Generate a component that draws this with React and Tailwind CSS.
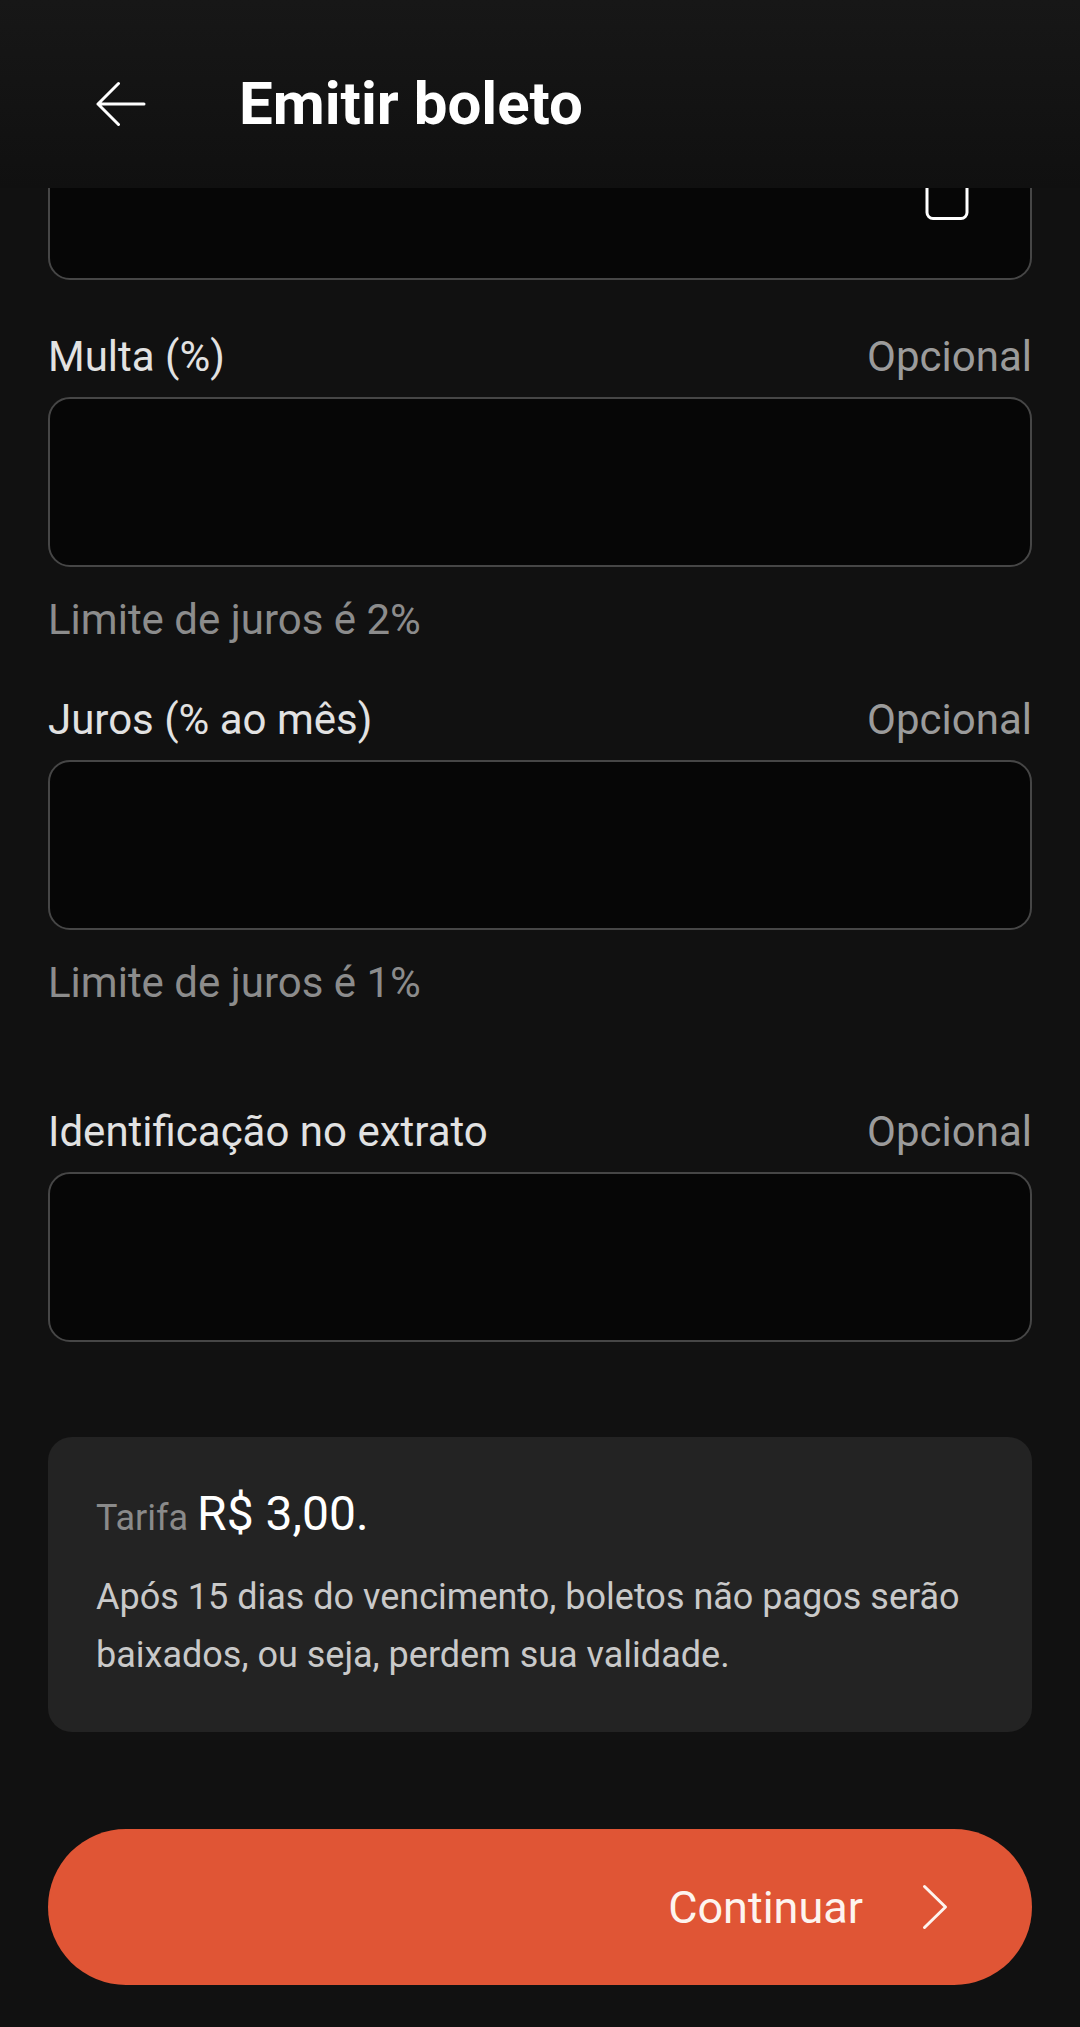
export default function App() {
  return (
    <div className="relative min-h-[2027px] bg-[#111111] font-['Roboto','Noto_Sans',sans-serif] text-white">
      <Header />
      <main className="px-[48px] pt-[110px] pb-[40px]">
        <div className="h-[170px] rounded-[22px] border-2 border-[#464646] bg-[#060606] flex items-center justify-end pr-[61px]">
          <svg width="44" height="50" viewBox="0 0 44 50" fill="none">
            <rect x="2" y="1.5" width="40" height="47" rx="6" stroke="white" strokeWidth="3" />
          </svg>
        </div>

        <Field label="Multa (%)" hint="Limite de juros é 2%" className="mt-[52px]" />
        <Field label="Juros (% ao mês)" hint="Limite de juros é 1%" className="mt-[50px]" />
        <Field label="Identificação no extrato" className="mt-[99px]" />

        <div className="mt-[95px] rounded-[24px] bg-[#232323] px-[48px] pt-[49px] pb-[48px]">
          <p className="leading-[56px] whitespace-nowrap">
            <span className="text-[36px] text-[#8a8a8a]">Tarifa </span>
            <span className="text-[48px] text-white">R$ 3,00.</span>
          </p>
          <p className="mt-[15px] text-[36px] leading-[58px] text-[#c9c9c9]">
            Após 15 dias do vencimento, boletos não pagos serão baixados, ou seja, perdem sua validade.
          </p>
        </div>

        <button className="mt-[97px] w-full h-[156px] rounded-full bg-[#e05535] flex items-center justify-end pr-[84px]">
          <span className="text-[45px] leading-none text-[#fdf4ef]">Continuar</span>
          <svg className="ml-[59px]" width="26" height="46" viewBox="0 0 26 46" fill="none">
            <path d="M2.5 2.5 L23.5 23 L2.5 43.5" stroke="#fdf4ef" strokeWidth="3" strokeLinecap="round" strokeLinejoin="round" />
          </svg>
        </button>
      </main>
    </div>
  );
}

function Header() {
  return (
    <header className="absolute inset-x-0 top-0 z-10 h-[188px] bg-gradient-to-b from-[#171717] to-[#101010]">
      <div className="flex items-center h-[60px] mt-[74px] pl-[96px]">
        <svg width="50" height="46" viewBox="0 0 50 46" fill="none">
          <path d="M2 23 H48 M22.5 2.5 L2 23 L22.5 43.5" stroke="white" strokeWidth="3" strokeLinecap="round" strokeLinejoin="round" />
        </svg>
        <h1 className="ml-[93px] text-[60px] leading-[60px] font-bold">Emitir boleto</h1>
      </div>
    </header>
  );
}

function Field({ label, hint, className = "" }) {
  return (
    <div className={className}>
      <div className="flex justify-between items-center h-[50px] text-[42px] leading-[50px]">
        <span className="text-[#e2e2e2]">{label}</span>
        <span className="text-[#9b9b9b]">Opcional</span>
      </div>
      <div className="mt-[15px] h-[170px] rounded-[22px] border-2 border-[#464646] bg-[#060606]" />
      {hint && (
        <p className="mt-[28px] text-[42px] leading-[50px] text-[#8c8c8c]">{hint}</p>
      )}
    </div>
  );
}
